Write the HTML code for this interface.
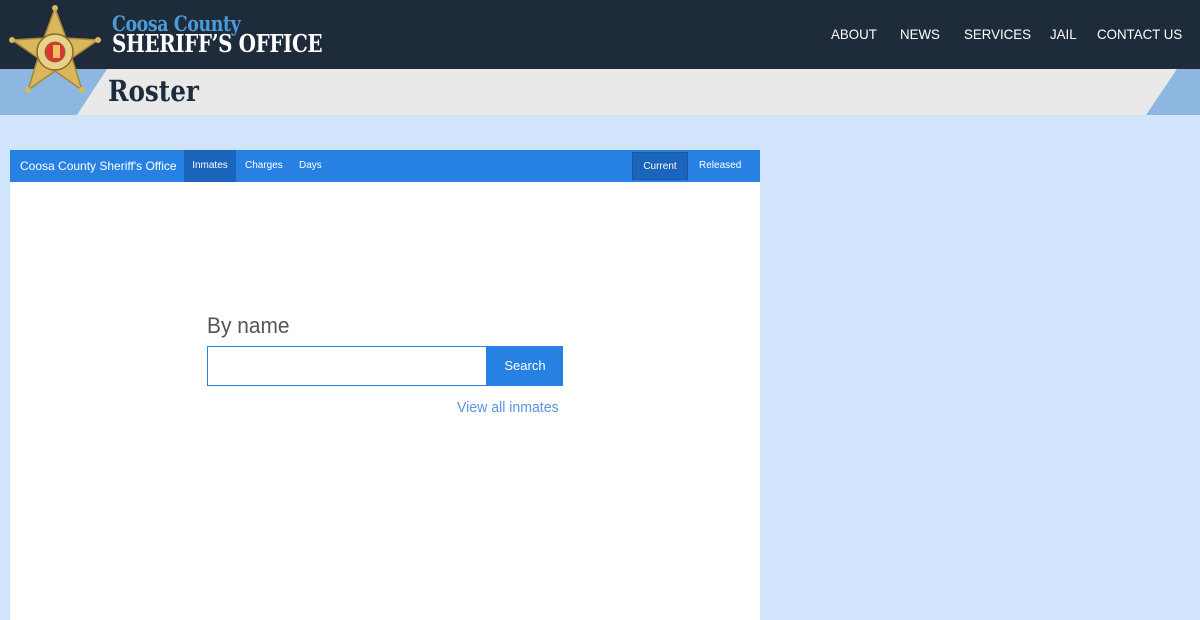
<!DOCTYPE html>
<html><head><style>
body{margin:0;width:1200px;height:620px;overflow:hidden;background:#d0e5fb;font-family:"Liberation Sans",sans-serif;position:relative}
.hdr{position:absolute;left:0;top:0;width:1200px;height:69px;background:#1d2b3a}
.band{position:absolute;left:0;top:69px;width:1200px;height:46px;background:#e9e9e9}
.t1{position:absolute;left:112px;top:12px;color:#4d9ad8;font:bold 21px "DejaVu Serif",serif;line-height:24px;transform:scaleX(0.83);transform-origin:0 0;letter-spacing:-0.5px}
.t2{position:absolute;left:112px;top:30px;color:#fff;font:bold 24px "DejaVu Serif",serif;line-height:28px;transform:scaleX(0.83);transform-origin:0 0;letter-spacing:-0.5px}
.nav{position:absolute;top:26px;color:#fff;font-size:14px;transform:scaleX(0.95);transform-origin:0 0}
.roster{position:absolute;left:108px;top:74px;font:bold 29px "DejaVu Serif",serif;color:#1d2b3a;transform:scaleX(0.85);transform-origin:0 0}
.panel{position:absolute;left:10px;top:150px;width:750px;height:470px;background:#fff}
.bar{position:absolute;left:10px;top:150px;width:750px;height:32px;background:#2781e3;color:#fff}
.bar span{position:absolute;top:0;line-height:32px;font-size:10px}
</style></head><body>
<div class="hdr"></div>
<div class="band"></div>
<svg style="position:absolute;left:0;top:69px" width="1200" height="46"><polygon points="0,0 107,0 77,46 0,46" fill="#8db6e0"/><polygon points="1177,0 1200,0 1200,46 1146,46" fill="#8db6e0"/></svg>
<svg style="position:absolute;left:8px;top:4px" width="94" height="92" viewBox="0 0 94 92">
<polygon points="47,4 58,34 90,36 64,54 74,86 47,67 20,86 30,54 4,36 36,34" fill="#d8b85a" stroke="#a8863a" stroke-width="1.5"/>
<circle cx="47" cy="4" r="3" fill="#d8b85a"/><circle cx="90" cy="36" r="3" fill="#d8b85a"/><circle cx="4" cy="36" r="3" fill="#d8b85a"/><circle cx="74" cy="86" r="3" fill="#d8b85a"/><circle cx="20" cy="86" r="3" fill="#d8b85a"/>
<circle cx="47" cy="48" r="18" fill="#e8d28a" stroke="#8a6a2a" stroke-width="1.5"/>
<circle cx="47" cy="48" r="10" fill="#d33" stroke="#8a6a2a"/><rect x="45" y="41" width="7" height="13" fill="#eec060"/>
</svg>
<div class="t1">Coosa County</div>
<div class="t2">SHERIFF’S OFFICE</div>
<div class="nav" style="left:831px">ABOUT</div>
<div class="nav" style="left:900px">NEWS</div>
<div class="nav" style="left:964px">SERVICES</div>
<div class="nav" style="left:1050px">JAIL</div>
<div class="nav" style="left:1097px">CONTACT US</div>
<div class="roster">Roster</div>
<div class="panel"></div>
<div class="bar">
<span style="left:10px;font-size:12px">Coosa County Sheriff's Office</span>
<span style="left:174px;width:52px;background:#1a64bc;text-align:center">Inmates</span>
<span style="left:235px">Charges</span>
<span style="left:289px">Days</span>
<span style="left:622px;top:2px;width:56px;height:28px;line-height:28px;background:#1a64bc;text-align:center;border:1px solid #1656a3;box-sizing:border-box">Current</span>
<span style="left:689px">Released</span>
</div>
<div style="position:absolute;left:207px;top:313px;font-size:22px;color:#555;font-weight:300;transform:scaleX(0.95);transform-origin:0 0">By name</div>
<div style="position:absolute;left:207px;top:346px;width:280px;height:40px;border:1px solid #2781e3;box-sizing:border-box;background:#fff"></div>
<div style="position:absolute;left:487px;top:346px;width:76px;height:40px;background:#2781e3;color:#fff;font-size:13px;line-height:40px;text-align:center">Search</div>
<div style="position:absolute;left:457px;top:399px;font-size:15px;color:#5a94e0;transform:scaleX(0.94);transform-origin:0 0">View all inmates</div>
</body></html>
